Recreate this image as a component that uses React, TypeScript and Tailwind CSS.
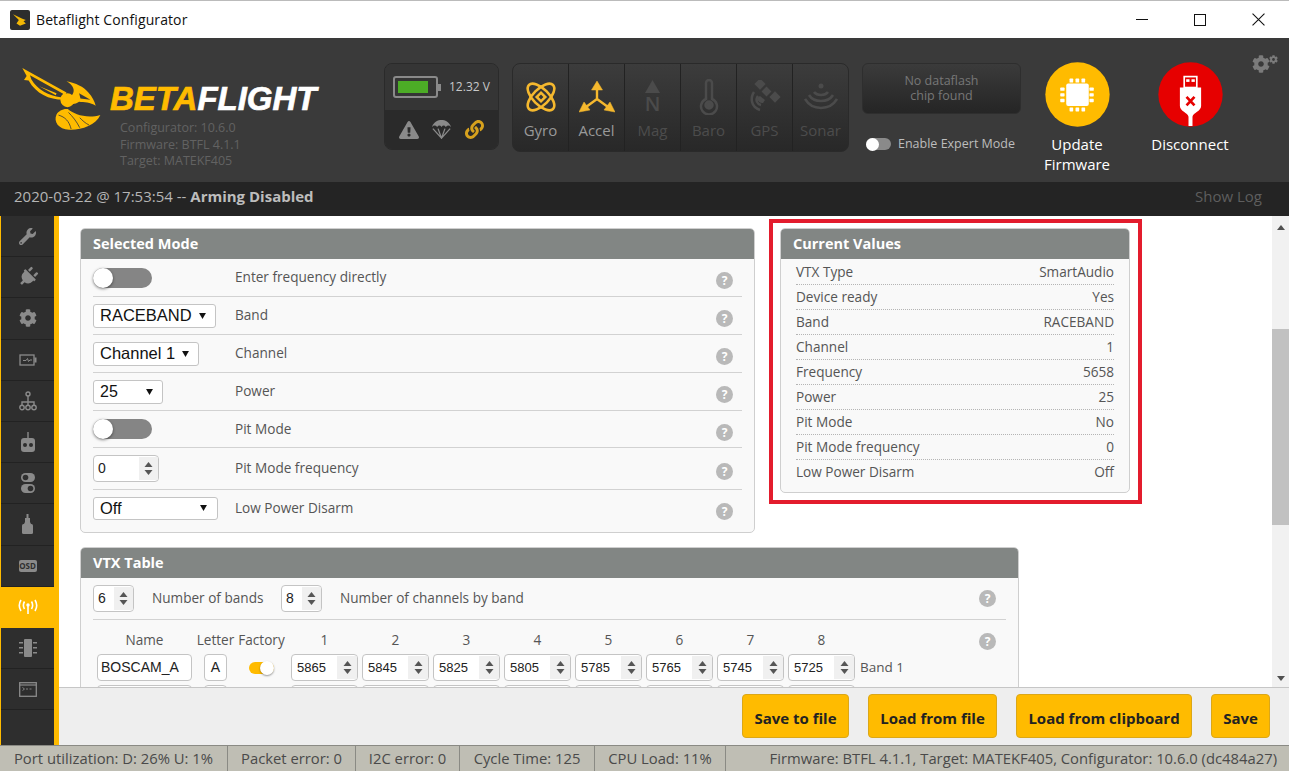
import React from "react";
import { FaWrench, FaPlug, FaCog, FaExclamationTriangle, FaLink } from "react-icons/fa";

const Logo = () => (
  <svg viewBox="60 30 250 200" className="w-[83px] h-[67px] shrink-0" fill="#ffbb00">
    <path d="M67 38 L200 112 L190 134 C148 134 108 116 86 76 L72 74 L80 62 Z M90 60 L94 72 C112 104 148 122 182 126 L190 116 Z" fillRule="evenodd" />
    <path d="M118 93 L170 114 L168 120 Z" />
    <path d="M200 78 C228 84 252 94 266 112 C278 124 285 140 288 152 C272 141 252 142 238 140 C228 146 222 148 214 146 C208 130 212 124 218 118 C226 106 222 90 200 78 Z" />
    <circle cx="203" cy="135" r="21" />
    <path d="M238 114 L272 134 L242 130 Z" fill="#3a3a3a" />
    <path d="M302 180 C288 212 242 226 208 224 C176 222 160 200 170 178 C176 168 190 160 204 162 C222 178 262 192 302 180 Z" />
    <path d="M176 180 C196 186 208 198 214 222 M206 172 C218 184 230 198 240 218 M240 188 C248 196 256 204 268 210" stroke="#3a3a3a" strokeWidth="2.500" fill="none" />
  </svg>
);

const Parachute = () => (
  <svg viewBox="0 0 24 22" className="w-[21px] h-[19px]" fill="#8a8a8a">
    <path d="M1 8 C3 2 8 0 12 0 C16 0 21 2 23 8 C21 6 19 6 17 8 C15.500 6 13.500 6 12 8 C10.500 6 8.500 6 7 8 C5 6 3 6 1 8 Z" />
    <path d="M2 10 L12 21 L22 10 M8 10 L12 21 L16 10" stroke="#8a8a8a" strokeWidth="1.500" fill="none" />
  </svg>
);

const Atom = () => (
  <svg viewBox="0 0 32 32" className="w-[32px] h-[32px]" fill="none" stroke="#f5b82e" strokeWidth="2.600">
    <ellipse cx="16" cy="16" rx="17" ry="8" transform="rotate(45 16 16)" />
    <ellipse cx="16" cy="16" rx="17" ry="8" transform="rotate(-45 16 16)" />
    <rect x="13" y="13" width="6" height="6" transform="rotate(45 16 16)" />
  </svg>
);

const Accel = () => (
  <svg viewBox="0 0 36 34" className="w-[36px] h-[34px]" fill="#f5b82e" stroke="#f5b82e">
    <path d="M18 19 V8 M18 19 L7 27 M18 19 L29 27" strokeWidth="2.400" fill="none" />
    <path d="M18 1 L23.500 10 H12.500 Z M0 32 L5 22 L11 30 Z M36 32 L25 30 L31 22 Z" strokeWidth="0.500" />
  </svg>
);

const Thermo = () => (
  <svg viewBox="0 0 20 36" className="w-[20px] h-[36px]" fill="none" stroke="#4b4b4b" strokeWidth="2.500">
    <path d="M7 4 A3 3 0 0 1 13 4 V20 A8 8 0 1 1 7 20 Z" />
    <circle cx="10" cy="26" r="3.500" fill="#4b4b4b" />
  </svg>
);

const Satellite = () => (
  <svg viewBox="0 0 34 34" className="w-[34px] h-[34px]" fill="#4b4b4b">
    <rect x="8" y="0" width="8" height="8" transform="rotate(45 12 4)" />
    <rect x="23" y="13" width="8" height="8" transform="rotate(45 27 17)" />
    <rect x="15" y="8" width="7" height="7" transform="rotate(45 18.500 11.500)" />
    <path d="M6 12 C2 18 3 27 12 30 M10 16 C7 20 9 24 13 25" fill="none" stroke="#4b4b4b" strokeWidth="2.500" />
    <path d="M9 18 C10 22 12 23 15 23 L17 20 L12 16 Z" />
  </svg>
);

const Sonar = () => (
  <svg viewBox="0 0 34 30" className="w-[34px] h-[30px]" fill="none" stroke="#4b4b4b" strokeWidth="2.600">
    <circle cx="17" cy="4" r="2.500" fill="#4b4b4b" stroke="none" />
    <path d="M10 10 C13 14 21 14 24 10 M5 13 C10 21 24 21 29 13 M1 17 C8 29 26 29 33 17" />
  </svg>
);

const Chip = () => (
  <svg viewBox="46 35 196 196" className="w-[65px] h-[65px]">
    <circle cx="144" cy="133" r="97" fill="#ffbb00" />
    <rect x="110" y="100" width="68" height="68" rx="6" fill="#fff" />
    <g fill="#fff">
      <rect x="120" y="85" width="11" height="12" rx="2" /><rect x="138" y="85" width="11" height="12" rx="2" /><rect x="156" y="85" width="11" height="12" rx="2" />
      <rect x="120" y="172" width="11" height="12" rx="2" /><rect x="138" y="172" width="11" height="12" rx="2" /><rect x="156" y="172" width="11" height="12" rx="2" />
      <rect x="92" y="112" width="13" height="10" rx="2" /><rect x="92" y="129" width="13" height="10" rx="2" /><rect x="92" y="146" width="13" height="10" rx="2" />
      <rect x="180" y="112" width="13" height="10" rx="2" /><rect x="180" y="129" width="13" height="10" rx="2" /><rect x="180" y="146" width="13" height="10" rx="2" />
    </g>
  </svg>
);

const Usb = () => (
  <svg viewBox="384 35 196 196" className="w-[65px] h-[65px]">
    <circle cx="482" cy="133" r="97" fill="#e60000" />
    <rect x="463" y="79" width="38" height="33" fill="none" stroke="#fff" strokeWidth="5" />
    <rect x="469" y="87" width="10" height="8" fill="#fff" /><rect x="485" y="87" width="10" height="8" fill="#fff" />
    <path d="M450 112 H514 V168 C514 184 490 188 488 200 V228 H476 V200 C474 188 450 184 450 168 Z" fill="#fff" />
    <path d="M470 140 L494 166 M494 140 L470 166" stroke="#e60000" strokeWidth="8" fill="none" />
  </svg>
);

const Gear = ({ size }: { size: number }) => <FaCog size={size} color="#7b7b7b" />;

const I = "#8a8a8a";
const SideBattery = () => (
  <svg viewBox="0 0 18 12" className="w-[18px] h-[12px]" fill="none">
    <rect x="1" y="1" width="14" height="10" stroke={I} strokeWidth="1.300" />
    <rect x="15.500" y="3.500" width="2" height="5" fill={I} />
    <path d="M4 6.500 H7 L8.500 4.500 L9.500 7.500 L11 6 H13" stroke={I} />
  </svg>
);
const Sitemap = () => (
  <svg viewBox="0 0 18 20" className="w-[18px] h-[20px]" fill="none" stroke={I} strokeWidth="1.400">
    <circle cx="9" cy="3" r="2" />
    <path d="M9 5 V11 M3 14 V11 H15 V14 M9 11 V14" />
    <circle cx="3" cy="16.500" r="2.200" /><circle cx="9" cy="16.500" r="2.200" /><circle cx="15" cy="16.500" r="2.200" />
  </svg>
);
const Radio = () => (
  <svg viewBox="0 0 16 20" className="w-[16px] h-[20px]">
    <rect x="7.300" y="0" width="1.400" height="7" fill={I} />
    <rect x="1" y="6" width="14" height="14" rx="3" fill={I} />
    <circle cx="5" cy="13" r="2" fill="#2e2e2e" /><circle cx="11" cy="13" r="2" fill="#2e2e2e" />
  </svg>
);
const Toggles = () => (
  <svg viewBox="0 0 16 20" className="w-[16px] h-[20px]">
    <rect x="1" y="0" width="14" height="9" rx="4.500" fill={I} /><circle cx="5.500" cy="4.500" r="2.800" fill="#2e2e2e" />
    <rect x="1" y="11" width="14" height="9" rx="4.500" fill={I} /><circle cx="10.500" cy="15.500" r="2.800" fill="#2e2e2e" />
  </svg>
);
const Motor = () => (
  <svg viewBox="0 0 12 20" className="w-[13px] h-[20px]" fill={I}>
    <rect x="5" y="0" width="2" height="4" />
    <path d="M3.500 4 H8.500 V8 L9.500 10 H2.500 L3.500 8 Z" />
    <rect x="0.500" y="10" width="11" height="10" rx="1.500" />
  </svg>
);
const Tower = ({ c = "#fff" }: { c?: string }) => (
  <svg viewBox="0 0 20 16" className="w-[20px] h-[16px]" fill="none" stroke={c} strokeWidth="1.600">
    <circle cx="10" cy="6" r="1.700" fill={c} stroke="none" />
    <path d="M10 6 V15" />
    <path d="M6.500 2.500 C5 5 5 7.500 6.500 10 M13.500 2.500 C15 5 15 7.500 13.500 10 M3 1 C0.500 5 0.500 8 3 12 M17 1 C19.500 5 19.500 8 17 12" />
  </svg>
);
const SideChip = () => (
  <svg viewBox="0 0 18 18" className="w-[18px] h-[18px]" fill={I}>
    <rect x="5" y="0" width="8" height="18" rx="1" />
    <path d="M0 3 H4 V4.500 H0 Z M0 8 H4 V9.500 H0 Z M0 13 H4 V14.500 H0 Z M14 3 H18 V4.500 H14 Z M14 8 H18 V9.500 H14 Z M14 13 H18 V14.500 H14 Z" />
  </svg>
);
const Cli = () => (
  <svg viewBox="0 0 18 15" className="w-[18px] h-[15px]" fill="none" stroke={I}>
    <rect x="0.700" y="0.700" width="16.600" height="13.600" strokeWidth="1.300" />
    <path d="M1 3 H17" strokeWidth="1.200" />
    <path d="M3.500 5.500 L5.500 7 L3.500 8.500 M7 7 H9 M10.500 7 H12.500" strokeWidth="0.900" />
  </svg>
);

const sideItems: [React.ReactNode, boolean][] = [
  [<FaWrench size={17} color={I} />, false],
  [<FaPlug size={20} color={I} className="rotate-45" />, false],
  [<FaCog size={18} color={I} />, false],
  [<SideBattery />, false],
  [<Sitemap />, false],
  [<Radio />, false],
  [<Toggles />, false],
  [<Motor />, false],
  [<span className="bg-[#8a8a8a] text-[#2e2e2e] rounded-[2px] text-[8px] leading-[12px] font-bold w-[18px] text-center">OSD</span>, false],
  [<Tower />, true],
  [<SideChip />, false],
  [<Cli />, false],
];

const ARIAL = "[font-family:Liberation_Sans,Arial,sans-serif]";

const Help = ({ className = "" }: { className?: string }) => (
  <span className={`w-[17px] h-[17px] rounded-full bg-[#b9b9b9] text-white text-[12px] leading-[17px] font-bold text-center shrink-0 ${className}`}>?</span>
);

const Switch = () => (
  <div className="w-[59px] h-[20px] rounded-full bg-[#858585] relative">
    <div className="absolute left-0 top-0 w-[20px] h-[20px] rounded-full bg-white shadow-[0_1px_3px_rgba(0,0,0,0.5)]" />
  </div>
);

const Sel = ({ label, w, h, arrow, size = "text-[16.500px]" }: { label: string; w: string; h: string; arrow: string; size?: string }) => (
  <div className={`${w} ${h} ${size} ${ARIAL} relative flex items-center pl-[6px] bg-white border border-[#c4c4c4] rounded-[3px] text-[#111]`}>
    {label}
    <svg viewBox="0 0 8 7" className={`absolute top-1/2 -translate-y-1/2 w-[7px] h-[6px] ${arrow}`}><path d="M0 0 H8 L4 7 Z" fill="#111" /></svg>
  </div>
);

const Spin = ({ v, w, h = "h-[27px]", sw = "w-[19px]", size = "text-[14px]", pl = "pl-[4px]" }: { v: string; w: string; h?: string; sw?: string; size?: string; pl?: string }) => (
  <div className={`${w} ${h} ${size} ${ARIAL} flex items-stretch bg-white border border-[#c4c4c4] rounded-[4px] overflow-hidden text-[#222] shrink-0`}>
    <span className={`flex-1 flex items-center ${pl}`}>{v}</span>
    <span className={`${sw} bg-[#f0f0f0] flex flex-col items-center justify-center gap-[3px] my-[1px]`}>
      <svg viewBox="0 0 8 5" className="w-[9px] h-[5px]"><path d="M4 0 L8 5 H0 Z" fill="#555" /></svg>
      <svg viewBox="0 0 8 5" className="w-[9px] h-[5px]"><path d="M0 0 H8 L4 5 Z" fill="#555" /></svg>
    </span>
  </div>
);

const PanelHead = ({ t }: { t: string }) => (
  <div className="h-[30px] bg-[#828684] rounded-t-[4px] flex items-center pl-[12px] text-white text-[14.500px] font-bold">{t}</div>
);

const modeRows: [React.ReactNode, string, string][] = [
  [<Switch />, "Enter frequency directly", "h-[38px]"],
  [<Sel label="RACEBAND" w="w-[123px]" h="h-[24px]" arrow="right-[9px]" />, "Band", "h-[38px]"],
  [<Sel label="Channel 1" w="w-[106px]" h="h-[24px]" arrow="right-[9px]" />, "Channel", "h-[38px]"],
  [<Sel label="25" w="w-[70px]" h="h-[24px]" arrow="right-[9px]" size="text-[16px]" />, "Power", "h-[38px]"],
  [<Switch />, "Pit Mode", "h-[37px]"],
  [<Spin v="0" w="w-[66px]" sw="w-[19px]" pl="pl-[4px]" />, "Pit Mode frequency", "h-[42px]"],
  [<Sel label="Off" w="w-[125px]" h="h-[23px]" arrow="right-[10px]" />, "Low Power Disarm", "h-[42px] pb-[6px]"],
];

const values: [string, string][] = [
  ["VTX Type", "SmartAudio"],
  ["Device ready", "Yes"],
  ["Band", "RACEBAND"],
  ["Channel", "1"],
  ["Frequency", "5658"],
  ["Power", "25"],
  ["Pit Mode", "No"],
  ["Pit Mode frequency", "0"],
  ["Low Power Disarm", "Off"],
];

const freqs = ["5865", "5845", "5825", "5805", "5785", "5765", "5745", "5725"];
const Sensor = ({ icon, label, on, last }: { icon: React.ReactNode; label: string; on?: boolean; last?: boolean }) => (
  <div className={`flex-1 flex flex-col items-center ${last ? "" : "border-r border-[#222]"}`}>
    <div className="h-[50px] mt-[8px] flex items-center justify-center">{icon}</div>
    <div className={`text-[15px] -mt-[3px] ${on ? "text-[#999]" : "text-[#4c4c4c]"}`}>{label}</div>
  </div>
);

const statusSegs: [string, string][] = [
  ["Port utilization: D: 26% U: 1%", "w-[228px]"],
  ["Packet error: 0", "w-[128px]"],
  ["I2C error: 0", "w-[104px]"],
  ["Cycle Time: 125", "w-[135px]"],
  ["CPU Load: 11%", "w-[131px]"],
];

export default function App() {
  return (
    <div className="w-[1289px] h-[771px] overflow-hidden flex flex-col bg-white text-[13.600px] text-[#555] [font-family:Open_Sans,Liberation_Sans,sans-serif]">
      {/* title bar */}
      <div className="h-[38px] shrink-0 flex items-center bg-white pl-[10px] border-t border-[#bbb]">
        <div className="w-[20px] h-[20px] bg-[#2d2d2d] rounded-[2px] flex items-center justify-center">
          <svg viewBox="0 0 12 10" className="w-[14px] h-[12px]"><path d="M0 0 L8 4 L11 5 L9 6 L11 8 L6 10 L3 8 L5 5 Z" fill="#f2b705" /></svg>
        </div>
        <span className="ml-[6px] text-[14px] text-[#111] tracking-[0.1px]">Betaflight Configurator</span>
        <div className="ml-auto flex h-full items-center">
          <div className="w-[58px] flex justify-center"><div className="w-[12px] h-[1px] bg-[#111]" /></div>
          <div className="w-[58px] flex justify-center"><div className="w-[12px] h-[12px] border border-[#111]" /></div>
          <div className="w-[58px] flex justify-center mr-[2px]">
            <svg viewBox="0 0 12 12" className="w-[13px] h-[13px]"><path d="M0.500 0.500 L11.500 11.500 M11.500 0.500 L0.500 11.500" stroke="#111" strokeWidth="1" /></svg>
          </div>
        </div>
      </div>

      {/* header */}
      <div className="h-[144px] shrink-0 bg-[#3a3a3a] flex items-start pt-[25px] relative">
        <div className="w-[384px] shrink-0 flex pl-[20px] pt-[2px]">
          <Logo />
          <div className="ml-[7px] pt-[19px]">
            <div className={`text-[33px] leading-[30px] font-bold italic ${ARIAL} whitespace-nowrap [-webkit-text-stroke:0.7px_currentColor]`}>
              <span className="text-[#ffbb00]">BETA</span><span className="text-white">FLIGHT</span>
            </div>
            <div className="ml-[10px] mt-[6px] text-[12.500px] leading-[16.500px] text-[#626262]">
              <div>Configurator: 10.6.0</div>
              <div>Firmware: BTFL 4.1.1</div>
              <div>Target: MATEKF405</div>
            </div>
          </div>
        </div>

        <div className="w-[115px] h-[87px] shrink-0 rounded-[8px] border border-[#2a2a2a] overflow-hidden flex flex-col">
          <div className="h-[46px] bg-[#353535] flex items-center pl-[8px]">
            <div className="w-[45px] h-[22px] rounded-[3px] border-2 border-[#8a8a8a] p-[3px]">
              <div className="w-[30px] h-full bg-[#4cac26]" />
            </div>
            <div className="w-[3px] h-[7px] bg-[#8a8a8a]" />
            <span className="ml-[8px] text-[12px] text-[#c9c9c9]">12.32 V</span>
          </div>
          <div className="flex-1 bg-[#2a2a2a] flex items-center justify-around px-[8px]">
            <FaExclamationTriangle size={20} color="#8a8a8a" />
            <Parachute />
            <FaLink size={19} color="#d6a11d" />
          </div>
        </div>

        <div className="w-[337px] h-[89px] ml-[13px] shrink-0 rounded-[8px] border border-[#2a2a2a] overflow-hidden flex bg-gradient-to-b from-[#3c3c3c] to-[#282828]">
          <Sensor icon={<Atom />} label="Gyro" on />
          <Sensor icon={<Accel />} label="Accel" on />
          <Sensor
            icon={
              <div className="flex flex-col items-center text-[#4b4b4b]">
                <svg viewBox="0 0 14 12" className="w-[15px] h-[13px]"><path d="M7 0 L14 12 H0 Z" fill="#4b4b4b" /></svg>
                <span className="text-[20px] leading-[22px] font-semibold">N</span>
              </div>
            }
            label="Mag"
          />
          <Sensor icon={<Thermo />} label="Baro" />
          <Sensor icon={<Satellite />} label="GPS" />
          <Sensor icon={<Sonar />} label="Sonar" last />
        </div>

        <div className="w-[159px] ml-[13px] shrink-0 flex flex-col">
          <div className="h-[51px] pb-[2px] rounded-[6px] border border-[#2e2e2e] bg-gradient-to-b from-[#3b3b3b] to-[#252525] flex items-center justify-center text-center text-[12.500px] leading-[15px] text-[#777]">
            No dataflash<br />chip found
          </div>
          <div className="flex items-center mt-[21px] pl-[4px]">
            <div className="w-[25px] h-[12px] rounded-full bg-[#8a8a8a] relative">
              <div className="absolute left-0 -top-[0.500px] w-[13px] h-[13px] rounded-full bg-white" />
            </div>
            <span className="ml-[7px] text-[12.500px] text-[#bdbdbd] whitespace-nowrap">Enable Expert Mode</span>
          </div>
        </div>

        <div className="w-[90px] ml-[11px] shrink-0 flex flex-col items-center text-white text-[15px] leading-[20px] text-center -mt-[1px]">
          <Chip />
          <div className="mt-[7px]">Update<br />Firmware</div>
        </div>
        <div className="w-[90px] ml-[23px] shrink-0 flex flex-col items-center text-white text-[15px] leading-[20px] text-center -mt-[1px]">
          <Usb />
          <div className="mt-[7px]">Disconnect</div>
        </div>
        <div className="absolute left-[1252px] top-[17px] flex items-start">
          <Gear size={18} />
          <span className="-ml-[1px]"><Gear size={9} /></span>
        </div>
      </div>

      {/* log */}
      <div className="h-[34px] shrink-0 bg-[#242424] flex items-center justify-between pl-[14px] pr-[27px] pb-[5px] text-[15px]">
        <span className="text-[#b5b5b5]">2020-03-22 @ 17:53:54 -- <b className="text-[#bdbdbd]">Arming Disabled</b></span>
        <span className="text-[#5e5e5e]">Show Log</span>
      </div>

      {/* body */}
      <div className="flex-1 min-h-0 flex bg-[#ffbb00]">
        <div className="w-[53px] ml-[1px] shrink-0 bg-[#2e2e2e]">
          {sideItems.map(([ic, act], i) => (
            <div key={i} className={`h-[41.200px] flex items-center justify-center border-b ${act ? "bg-[#ffbb00] border-[#ffbb00]" : "border-[#222]"}`}>{ic}</div>
          ))}
        </div>
        <div className="ml-[5px] flex-1 min-w-0 flex flex-col bg-white">
          <div className="flex-1 min-h-0 flex">
            <div className="flex-1 min-w-0 overflow-hidden pl-[21px] pt-[3px]">
              <div className="flex items-start">
                <div className="w-[675px] mt-[9px] shrink-0 bg-[#f9f9f9] border border-[#cfcfcf] rounded-[5px]">
                  <PanelHead t="Selected Mode" />
                  <div className="px-[12px]">
                    {modeRows.map(([c, l, h], i) => (
                      <div key={l} className={`${h} flex items-center ${i < modeRows.length - 1 ? "border-b border-[#d2d2d2]" : ""}`}>
                        <div className="w-[142px] shrink-0">{c}</div>
                        <span className="flex-1">{l}</span>
                        <Help className="mr-[9px] mt-[6px]" />
                      </div>
                    ))}
                  </div>
                </div>
                <div className="ml-[14px] w-[373px] h-[285px] shrink-0 border-4 border-[#e31c2d] pt-[5px] pl-[7px] pr-[8px]">
                  <div className="h-[265px] bg-[#f9f9f9] border border-[#cfcfcf] rounded-[5px]">
                    <PanelHead t="Current Values" />
                    <div className="px-[15px] pt-[1px]">
                      {values.map(([k, v], i) => (
                        <div key={k} className={`h-[25px] flex items-center justify-between ${i < values.length - 1 ? "border-b border-dotted border-[#b5b5b5]" : ""}`}>
                          <span>{k}</span><span>{v}</span>
                        </div>
                      ))}
                    </div>
                  </div>
                </div>
              </div>

              <div className="w-[939px] mt-[14px] bg-[#f9f9f9] border border-[#cfcfcf] rounded-[5px]">
                <PanelHead t="VTX Table" />
                <div className="px-[12px]">
                  <div className="h-[42px] flex items-center border-b border-[#d2d2d2]">
                    <Spin v="6" w="w-[41px]" sw="w-[19px]" />
                    <span className="ml-[18px] w-[129px]">Number of bands</span>
                    <Spin v="8" w="w-[41px]" sw="w-[19px]" />
                    <span className="ml-[18px] flex-1">Number of channels by band</span>
                    <Help className="mr-[10px]" />
                  </div>
                  <div className="flex pt-[10px] h-[34px] text-center">
                    <span className="ml-[4px] w-[95px]">Name</span>
                    <span className="ml-[12px] w-[23px] flex justify-center">Letter</span>
                    <span className="ml-[22px] w-[25px] flex justify-center">Factory</span>
                    <div className="ml-[17px] flex gap-[4px]">
                      {freqs.map((_, i) => <span key={i} className="w-[67px]">{i + 1}</span>)}
                    </div>
                    <Help className="ml-[124px] mt-[3px]" />
                  </div>
                  {[0, 1].map((r) => (
                    <div key={r} className="flex items-center h-[27px] mb-[4px]">
                      <div className={`ml-[4px] w-[95px] h-[27px] pl-[3px] flex items-center bg-white border border-[#c4c4c4] rounded-[4px] text-[14px] text-[#222] ${ARIAL}`}>{r === 0 ? "BOSCAM_A" : ""}</div>
                      <div className={`ml-[12px] w-[23px] h-[27px] flex items-center justify-center bg-white border border-[#c4c4c4] rounded-[4px] text-[14px] text-[#222] ${ARIAL}`}>{r === 0 ? "A" : ""}</div>
                      <div className="ml-[22px] w-[25px] h-[12px] rounded-full bg-[#ffbb00] relative">
                        <div className="absolute right-0 -top-[1px] w-[14px] h-[14px] rounded-full bg-white shadow-[0_1px_2px_rgba(0,0,0,0.4)]" />
                      </div>
                      <div className="ml-[17px] flex gap-[4px]">
                        {freqs.map((f) => <Spin key={f} v={r === 0 ? f : ""} w="w-[67px]" sw="w-[20px]" size="text-[13px]" pl="pl-[5px]" />)}
                      </div>
                      {r === 0 && <span className="ml-[5px] text-[13.500px]">Band 1</span>}
                    </div>
                  ))}
                </div>
              </div>
            </div>
            {/* scrollbar */}
            <div className="w-[17px] shrink-0 bg-[#f1f1f1] flex flex-col items-center">
              <div className="h-[17px] flex items-center justify-center mt-[3px]"><svg viewBox="0 0 8 5" className="w-[8px] h-[5px]"><path d="M4 0 L8 5 H0 Z" fill="#505050" /></svg></div>
              <div className="w-full h-[196px] mt-[93px] bg-[#c1c1c1]" />
              <div className="mt-auto h-[17px] flex items-center justify-center"><svg viewBox="0 0 8 5" className="w-[8px] h-[5px]"><path d="M0 0 H8 L4 5 Z" fill="#505050" /></svg></div>
            </div>
          </div>
          {/* toolbar */}
          <div className="h-[58px] shrink-0 bg-[#eeeeee] border-t border-[#c6c6c6] flex items-start justify-end gap-[19px] pt-[6px] pr-[19px]">
            {["Save to file", "Load from file", "Load from clipboard", "Save"].map((b, i) => (
              <div key={b} className={`h-[44px] pt-[4px] ${["w-[107px]", "w-[129px]", "w-[176px]", "w-[59px]"][i]} bg-[#ffbb00] border border-[#dba718] rounded-[4px] flex items-center justify-center text-[15px] font-bold text-[#222]`}>{b}</div>
            ))}
          </div>
        </div>
      </div>

      {/* status */}
      <div className="h-[26px] shrink-0 bg-[#bfbeb4] border-t border-[#8a8a84] flex items-center text-[14.800px] text-[#4a4a4a]">
        {statusSegs.map(([t, w]) => (
          <div key={t} className={`${w} h-full flex items-center justify-center border-r border-[#8a8a84] whitespace-nowrap`}>{t}</div>
        ))}
        <div className="flex-1 text-right pr-[12px] whitespace-nowrap">Firmware: BTFL 4.1.1, Target: MATEKF405, Configurator: 10.6.0 (dc484a27)</div>
      </div>
    </div>
  );
}
